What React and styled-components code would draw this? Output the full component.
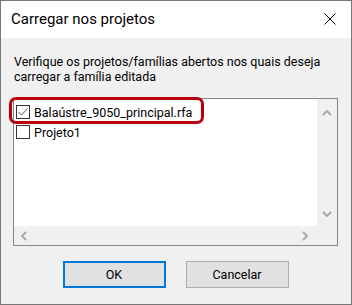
import React from "react";
import styled, { createGlobalStyle } from "styled-components";

const Global = createGlobalStyle`
  html, body { margin: 0; padding: 0; background: #f0f0f0; }
  * { box-sizing: border-box; }
`;

const Window = styled.div`
  width: 352px;
  height: 305px;
  border: 1px solid #777;
  background: #f0f0f0;
  display: flex;
  flex-direction: column;
  font-family: Roboto, "Liberation Sans", sans-serif;
  color: #000;
`;

const TitleBar = styled.div`
  height: 37px;
  flex-shrink: 0;
  background: #fff;
  display: flex;
  align-items: center;
  justify-content: space-between;
  padding: 0 15px 1px 10px;
`;

const Title = styled.span`
  font-size: 15px;
`;

const Body = styled.div`
  flex: 1;
  display: flex;
  flex-direction: column;
  padding: 16px 13px 0 12px;
`;

const Message = styled.p`
  margin: 0 0 0 1px;
  font-size: 12.5px;
  line-height: 15px;
`;

const ListBox = styled.div`
  position: relative;
  margin-top: 14px;
  height: 148px;
  border: 1px solid #828790;
  display: grid;
  grid-template-columns: 1fr 20px;
  grid-template-rows: 1fr 19px;
`;

const Items = styled.div`
  background: #fff;
  padding: 3px 0 0 2px;
  display: flex;
  flex-direction: column;
`;

const Item = styled.label`
  display: flex;
  align-items: center;
  gap: 4px;
  height: 20px;
  font-size: 12.5px;
`;

const Box = styled.span`
  width: 14px;
  height: 14px;
  border: 1px solid #333;
  background: #fff;
  display: flex;
  align-items: center;
  justify-content: center;
`;

const ScrollV = styled.div`
  background: #f0f0f0;
  display: flex;
  flex-direction: column;
  justify-content: space-between;
  align-items: center;
  padding: 10px 0 8px;
`;

const ScrollH = styled.div`
  background: #f0f0f0;
  display: flex;
  justify-content: space-between;
  align-items: center;
  padding: 0 8px 0 6px;
`;

const Corner = styled.div`
  background: #f0f0f0;
`;

const Highlight = styled.div`
  position: absolute;
  left: -5px;
  top: -2px;
  width: 195px;
  height: 27px;
  border: 3px solid #b8000f;
  border-radius: 7px;
  pointer-events: none;
`;

const Buttons = styled.div`
  display: flex;
  justify-content: center;
  gap: 20px;
  margin-top: 15px;
`;

const Button = styled.button`
  width: 103px;
  height: 27px;
  background: #e1e1e1;
  border: ${(p) => (p.$primary ? "2px solid #0078d7" : "1px solid #adadad")};
  font-family: inherit;
  font-size: 12.5px;
  color: #000;
  padding: 0;
`;

const Chevron = ({ dir }) => {
  const paths = {
    up: "M1 6 L5 2 L9 6",
    down: "M1 2 L5 6 L9 2",
    left: "M6 1 L2 5 L6 9",
    right: "M2 1 L6 5 L2 9",
  };
  const horiz = dir === "left" || dir === "right";
  return (
    <svg width={horiz ? 8 : 10} height={horiz ? 10 : 8} viewBox={horiz ? "0 0 8 10" : "0 0 10 8"}>
      <path d={paths[dir]} fill="none" stroke="#a6a6a6" strokeWidth="1.8" />
    </svg>
  );
};

const Check = () => (
  <svg width="12" height="12" viewBox="0 0 12 12">
    <path d="M1.5 6 L4.5 9 L10.5 2.5" fill="none" stroke="#555" strokeWidth="1" />
  </svg>
);

export default function App() {
  return (
    <>
      <Global />
      <Window>
        <TitleBar>
          <Title>Carregar nos projetos</Title>
          <svg width="12" height="12" viewBox="0 0 12 12">
            <path d="M0.5 0.5 L11.5 11.5 M11.5 0.5 L0.5 11.5" stroke="#000" strokeWidth="1" />
          </svg>
        </TitleBar>
        <Body>
          <Message>
            Verifique os projetos/famílias abertos nos quais deseja
            <br />
            carregar a família editada
          </Message>
          <ListBox>
            <Items>
              <Item>
                <Box>
                  <Check />
                </Box>
                Balaústre_9050_principal.rfa
              </Item>
              <Item>
                <Box />
                Projeto1
              </Item>
            </Items>
            <ScrollV>
              <Chevron dir="up" />
              <Chevron dir="down" />
            </ScrollV>
            <ScrollH>
              <Chevron dir="left" />
              <Chevron dir="right" />
            </ScrollH>
            <Corner />
            <Highlight />
          </ListBox>
          <Buttons>
            <Button $primary>OK</Button>
            <Button>Cancelar</Button>
          </Buttons>
        </Body>
      </Window>
    </>
  );
}
